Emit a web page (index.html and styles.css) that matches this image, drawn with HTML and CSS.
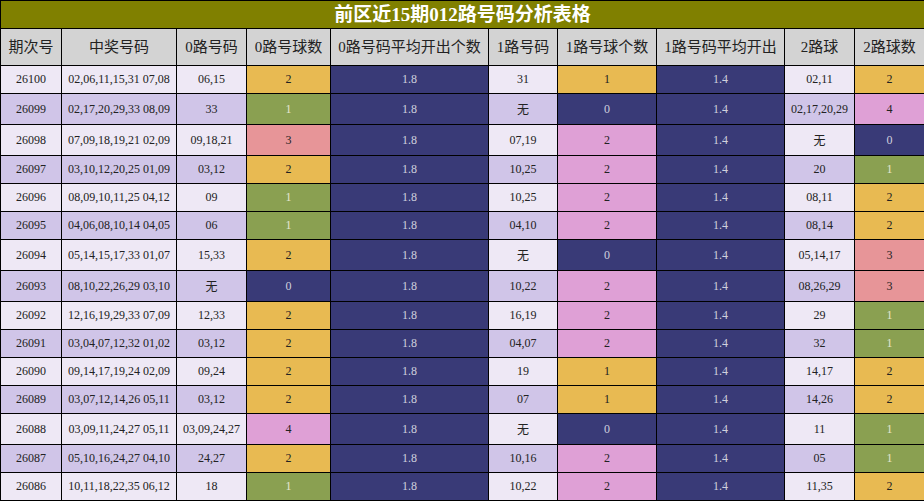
FILE: index.html
```html
<!DOCTYPE html>
<html lang="zh">
<head>
<meta charset="utf-8">
<title>前区近15期012路号码分析表格</title>
<link rel="stylesheet" href="styles.css">
</head>
<body>
<table class="grid">
<colgroup>
<col class="c1"><col class="c2"><col class="c3"><col class="c4"><col class="c5"><col class="c6"><col class="c7"><col class="c8"><col class="c9"><col class="c10">
</colgroup>
<thead>
<tr><th class="title" colspan="10">前区近15期012路号码分析表格</th></tr>
<tr class="head">
<th>期次号</th><th>中奖号码</th><th>0路号码</th><th>0路号球数</th><th>0路号码平均开出个数</th><th>1路号码</th><th>1路号球个数</th><th>1路号码平均开出</th><th>2路球</th><th>2路球数</th>
</tr>
</thead>
<tbody>
<tr class="odd"><td>26100</td><td>02,06,11,15,31 07,08</td><td>06,15</td><td class="y">2</td><td class="n">1.8</td><td>31</td><td class="y">1</td><td class="n">1.4</td><td>02,11</td><td class="y">2</td></tr>
<tr class="even"><td>26099</td><td>02,17,20,29,33 08,09</td><td>33</td><td class="g">1</td><td class="n">1.8</td><td>无</td><td class="n">0</td><td class="n">1.4</td><td>02,17,20,29</td><td class="l">4</td></tr>
<tr class="odd"><td>26098</td><td>07,09,18,19,21 02,09</td><td>09,18,21</td><td class="p">3</td><td class="n">1.8</td><td>07,19</td><td class="l">2</td><td class="n">1.4</td><td>无</td><td class="n">0</td></tr>
<tr class="even"><td>26097</td><td>03,10,12,20,25 01,09</td><td>03,12</td><td class="y">2</td><td class="n">1.8</td><td>10,25</td><td class="l">2</td><td class="n">1.4</td><td>20</td><td class="g">1</td></tr>
<tr class="odd"><td>26096</td><td>08,09,10,11,25 04,12</td><td>09</td><td class="g">1</td><td class="n">1.8</td><td>10,25</td><td class="l">2</td><td class="n">1.4</td><td>08,11</td><td class="y">2</td></tr>
<tr class="even"><td>26095</td><td>04,06,08,10,14 04,05</td><td>06</td><td class="g">1</td><td class="n">1.8</td><td>04,10</td><td class="l">2</td><td class="n">1.4</td><td>08,14</td><td class="y">2</td></tr>
<tr class="odd"><td>26094</td><td>05,14,15,17,33 01,07</td><td>15,33</td><td class="y">2</td><td class="n">1.8</td><td>无</td><td class="n">0</td><td class="n">1.4</td><td>05,14,17</td><td class="p">3</td></tr>
<tr class="even"><td>26093</td><td>08,10,22,26,29 03,10</td><td>无</td><td class="n">0</td><td class="n">1.8</td><td>10,22</td><td class="l">2</td><td class="n">1.4</td><td>08,26,29</td><td class="p">3</td></tr>
<tr class="odd"><td>26092</td><td>12,16,19,29,33 07,09</td><td>12,33</td><td class="y">2</td><td class="n">1.8</td><td>16,19</td><td class="l">2</td><td class="n">1.4</td><td>29</td><td class="g">1</td></tr>
<tr class="even"><td>26091</td><td>03,04,07,12,32 01,02</td><td>03,12</td><td class="y">2</td><td class="n">1.8</td><td>04,07</td><td class="l">2</td><td class="n">1.4</td><td>32</td><td class="g">1</td></tr>
<tr class="odd"><td>26090</td><td>09,14,17,19,24 02,09</td><td>09,24</td><td class="y">2</td><td class="n">1.8</td><td>19</td><td class="y">1</td><td class="n">1.4</td><td>14,17</td><td class="y">2</td></tr>
<tr class="even"><td>26089</td><td>03,07,12,14,26 05,11</td><td>03,12</td><td class="y">2</td><td class="n">1.8</td><td>07</td><td class="y">1</td><td class="n">1.4</td><td>14,26</td><td class="y">2</td></tr>
<tr class="odd"><td>26088</td><td>03,09,11,24,27 05,11</td><td>03,09,24,27</td><td class="l">4</td><td class="n">1.8</td><td>无</td><td class="n">0</td><td class="n">1.4</td><td>11</td><td class="g">1</td></tr>
<tr class="even"><td>26087</td><td>05,10,16,24,27 04,10</td><td>24,27</td><td class="y">2</td><td class="n">1.8</td><td>10,16</td><td class="l">2</td><td class="n">1.4</td><td>05</td><td class="g">1</td></tr>
<tr class="odd"><td>26086</td><td>10,11,18,22,35 06,12</td><td>18</td><td class="g">1</td><td class="n">1.8</td><td>10,22</td><td class="l">2</td><td class="n">1.4</td><td>11,35</td><td class="y">2</td></tr>
</tbody>
</table>
</body>
</html>
```

FILE: styles.css
```css
html, body {
  margin: 0;
  padding: 0;
  background: #ffffff;
}

.grid {
  width: 924px;
  table-layout: fixed;
  border-collapse: collapse;
  font-family: "Liberation Serif", "Noto Sans CJK SC", serif;
  color: #222222;
}

.c1 { width: 61px; }
.c2 { width: 115px; }
.c3 { width: 70px; }
.c4 { width: 84px; }
.c5 { width: 158px; }
.c6 { width: 69px; }
.c7 { width: 99px; }
.c8 { width: 128px; }
.c9 { width: 70px; }
.c10 { width: 70px; }

.grid th,
.grid td {
  border: 1px solid #000000;
  text-align: center;
  padding: 0;
  white-space: nowrap;
  overflow: hidden;
}

.title {
  background: #808000;
  color: #ffffff;
  font-size: 19px;
  font-weight: bold;
  height: 27px;
  line-height: 24px;
  padding: 0;
}

.head th {
  background: #d3d3d3;
  color: #222222;
  font-weight: normal;
  font-size: 15px;
  height: 36px;
  line-height: 22px;
}

.grid td {
  font-size: 12px;
  padding: 6px 0;
}

.odd td { background: #eee8f5; }
.even td { background: #d0c5e8; }

.grid td.y { background: #e8ba52; color: #222222; }
.grid td.g { background: #8aa051; color: #e6e6d2; }
.grid td.p { background: #e79598; color: #222222; }
.grid td.l { background: #dfa0d6; color: #222222; }
.grid td.n { background: #393a77; color: #d0d0de; }
```
